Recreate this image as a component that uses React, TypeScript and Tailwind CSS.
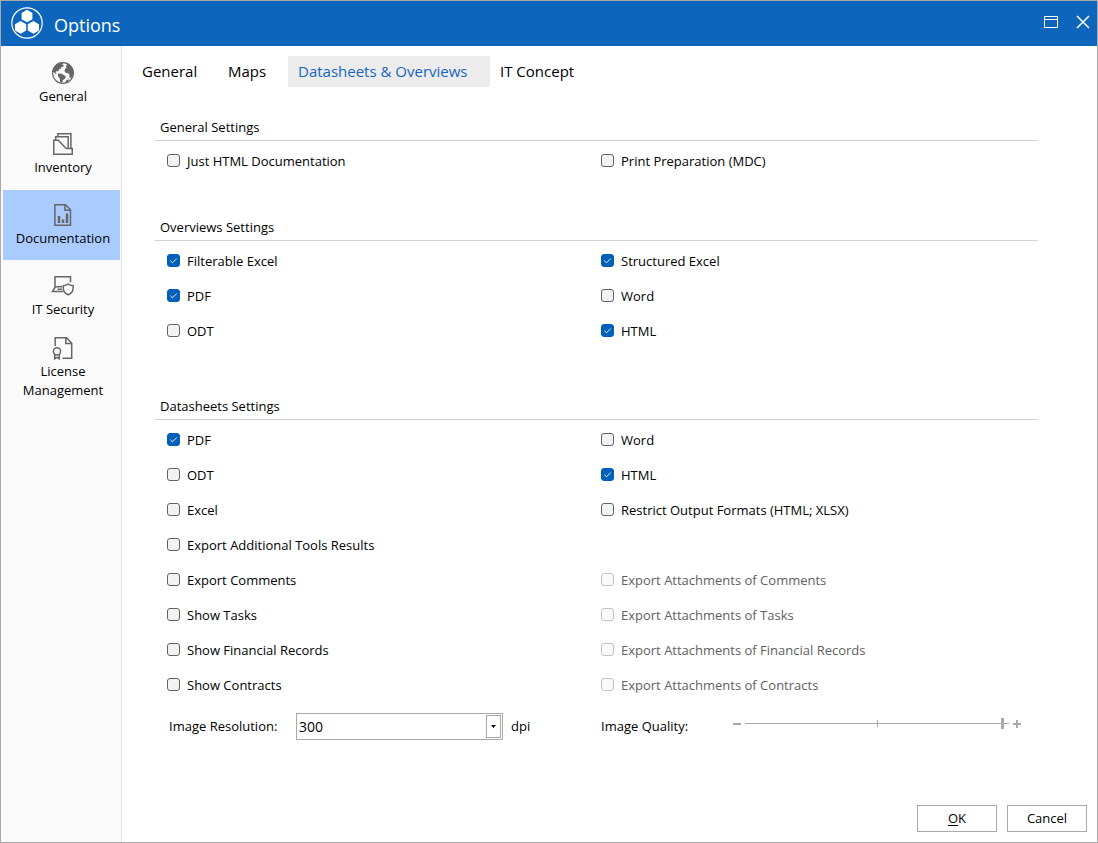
import { useState } from "react";
import type { ReactNode } from "react";
import clsx from "clsx";

interface Option {
  label: string;
  checked?: boolean;
  disabled?: boolean;
}

// null leaves the cell empty
type Row = [Option, Option | null];

const generalRows: Row[] = [
  [{ label: "Just HTML Documentation" }, { label: "Print Preparation (MDC)" }],
];

const overviewRows: Row[] = [
  [
    { label: "Filterable Excel", checked: true },
    { label: "Structured Excel", checked: true },
  ],
  [{ label: "PDF", checked: true }, { label: "Word" }],
  [{ label: "ODT" }, { label: "HTML", checked: true }],
];

const datasheetRows: Row[] = [
  [{ label: "PDF", checked: true }, { label: "Word" }],
  [{ label: "ODT" }, { label: "HTML", checked: true }],
  [{ label: "Excel" }, { label: "Restrict Output Formats (HTML; XLSX)" }],
  [{ label: "Export Additional Tools Results" }, null],
  [
    { label: "Export Comments" },
    { label: "Export Attachments of Comments", disabled: true },
  ],
  [
    { label: "Show Tasks" },
    { label: "Export Attachments of Tasks", disabled: true },
  ],
  [
    { label: "Show Financial Records" },
    { label: "Export Attachments of Financial Records", disabled: true },
  ],
  [
    { label: "Show Contracts" },
    { label: "Export Attachments of Contracts", disabled: true },
  ],
];

function Logo() {
  return (
    <svg className="h-8 w-8" viewBox="0 0 32 32" aria-hidden="true">
      <circle cx="16" cy="16" r="15.2" fill="none" stroke="#fff" strokeWidth="1.2" />
      <g fill="#fff">
        <path d="M16 2.8l5.400 3.100v6.300L16 15.300l-5.400-3.100V5.900z" />
        <path d="M9.600 14l5.600 3.200v6.400l-5.600 3.200L4 23.600v-6.400z" />
        <path d="M22.400 14l5.600 3.200v6.400l-5.600 3.200-5.600-3.200v-6.400z" />
      </g>
    </svg>
  );
}

function Icon({ children }: { children: ReactNode }) {
  return (
    <svg
      className="h-6 w-6"
      viewBox="0 0 24 24"
      fill="none"
      stroke="#666"
      strokeWidth="1.5"
      aria-hidden="true"
    >
      {children}
    </svg>
  );
}

const navItems = [
  {
    label: "General",
    icon: (
      <Icon>
        <circle cx="12" cy="12" r="10.400" strokeWidth="1.200" />
        <g fill="#666" stroke="none">
          <path d="M1.500 11C2 5.500 6 1.500 11.500 1.300l.8 1.200-1.300.8 1.800 1-.6 1.400-1.900.2-.4 1.700-1.900.9-.8 1.900-1.600-.3-1 1.200 1 1.200L4.500 13l-1.500-1.700z" />
          <path d="M6.800 12.800l3.200-.4 2.800 1.500 2 1.300-.8 2.600-2 1.200-1 2.700-1.800-.5-.4-3.700-1.800-2.200z" />
          <path d="M14.800 2c3.800 1 6.600 3.800 7.500 7.500l.1 3.200-1.100 3.300-1.300 1.200-1.400-.9-.3-3-1.200-1-2.300-.2-1.300-2 .6-2.300 1.700-1-1.100-1.400 1.300-1.300z" />
          <path d="M15.500 19l3.300-.8-2.300 2.600-2.600.9z" />
        </g>
      </Icon>
    ),
  },
  {
    label: "Inventory",
    icon: (
      <Icon>
        <path d="M2.750 22.200V8.300h4.500l3.300 3.500 4.700 4.700h6v5.700z" />
        <path d="M4.700 8V4.800h12.500v11.200M6.900 4.500V1.800h13v14.500" />
      </Icon>
    ),
  },
  {
    label: "Documentation",
    icon: (
      <Icon>
        <path d="M3.900 1.800h10.600l5 5v15.400H3.900z" />
        <path d="M14 2v5.300h5.300" />
        <path d="M8 13V20M12 16.500V20M16 10.500V20" strokeWidth="2.500" />
      </Icon>
    ),
  },
  {
    label: "IT Security",
    icon: (
      <Icon>
        <path d="M4 13V2.800h15.500v5.400M4 12.800h7M4.200 13l-2.700 4.500H12M6.500 15.200H11" />
        <path d="M17.200 10c1.500 1.200 3 1.600 4.900 1.700v2.500c0 3.200-2 5.300-4.900 6.500-2.900-1.200-4.900-3.300-4.900-6.500v-2.500c1.900-.1 3.400-.5 4.900-1.700z" />
      </Icon>
    ),
  },
  {
    label: "License Management",
    icon: (
      <Icon>
        <path d="M4.200 10V1.800h11.300l5.200 5.400v15H11.500" />
        <path d="M14.800 2v5.600h5.700" />
        <circle cx="6" cy="15.300" r="3.600" />
        <path d="M3.700 18v4.800L6 21.400l2.300 1.400V18" />
      </Icon>
    ),
  },
];

const tabs = [
  { label: "General", width: "w-[86px]" },
  { label: "Maps", width: "w-[70px]" },
  { label: "Datasheets & Overviews", width: "w-[202px]" },
  { label: "IT Concept", width: "w-[106px]" },
];

function CheckOption({ label, checked = false, disabled }: Option) {
  const [on, setOn] = useState(checked);

  return (
    <label
      className={clsx(
        "flex h-[35px] items-center gap-[7px]",
        disabled && "text-[#5f5f5f]"
      )}
    >
      <span className="relative h-[13px] w-[13px]">
        <input
          type="checkbox"
          checked={on}
          disabled={disabled}
          onChange={(e) => setOn(e.target.checked)}
          className="block h-[13px] w-[13px] appearance-none rounded-[3px] border border-[#626262] bg-[#f3f3f3] checked:border-[#005fb8] checked:bg-[#005fb8] disabled:border-[#c3c3c3] disabled:bg-[#f9f9f9]"
        />
        {on && (
          <svg
            className="pointer-events-none absolute inset-0 h-[13px] w-[13px]"
            viewBox="0 0 13 13"
            fill="none"
            stroke="#fff"
            strokeWidth=".9"
            aria-hidden="true"
          >
            <path d="M3.300 6.700l2.200 2.100 4.300-4.300" />
          </svg>
        )}
      </span>
      <span className="pt-0.5">{label}</span>
    </label>
  );
}

function Section({ title, rows }: { title: string; rows: Row[] }) {
  return (
    <section>
      <h2 className="h-[27px] border-b border-[#d3d3d3] pl-[5px] leading-[26px]">
        {title}
      </h2>
      <div className="grid grid-cols-2 pt-0.5 pr-[3px] pl-3">
        {rows.map(([left, right]) => [
          <CheckOption key={left.label} {...left} />,
          right ? (
            <CheckOption key={`${left.label}-right`} {...right} />
          ) : (
            <span key={`${left.label}-right`} />
          ),
        ])}
      </div>
    </section>
  );
}

function ImageSettings() {
  const [resolution, setResolution] = useState("300");
  const [quality, setQuality] = useState(98);

  return (
    <div className="mt-[11px] grid grid-cols-2 pr-[3px] pl-3">
      <div className="flex h-[27px] items-center pl-0.5">
        <label htmlFor="resolution" className="w-[127px]">
          Image Resolution:
        </label>
        <div className="relative h-[27px] w-[207px]">
          <select
            id="resolution"
            value={resolution}
            onChange={(e) => setResolution(e.target.value)}
            className="h-full w-full appearance-none border border-[#a9a9a9] bg-white pl-0.5 text-sm"
          >
            <option>72</option>
            <option>150</option>
            <option>300</option>
            <option>600</option>
          </select>
          <span className="pointer-events-none absolute top-0.5 right-0.5 flex h-[23px] w-[15px] items-center justify-center border border-[#a9a9a9] bg-white">
            <svg className="h-[3px] w-[5px]" viewBox="0 0 5 3" aria-hidden="true">
              <path d="M0 0h5L2.500 3z" />
            </svg>
          </span>
        </div>
        <span className="pl-2">dpi</span>
      </div>
      <div className="flex h-[27px] items-center">
        <label htmlFor="quality" className="w-[132px]">
          Image Quality:
        </label>
        <div className="flex flex-1 items-center gap-1 self-start pt-[5px] pr-3.5">
          <button
            type="button"
            aria-label="Decrease"
            onClick={() => setQuality(Math.max(0, quality - 1))}
          >
            <svg className="h-2 w-2" viewBox="0 0 8 8" aria-hidden="true">
              <path d="M0 3h8v2H0z" fill="#a9a9a9" />
            </svg>
          </button>
          <div className="relative flex h-[11px] flex-1 items-center">
            <span className="absolute inset-x-0 top-[5px] h-px bg-[#a9a9a9]" />
            <span className="absolute top-0.5 left-1/2 h-[7px] w-px bg-[#a9a9a9]" />
            <input
              id="quality"
              type="range"
              min={0}
              max={100}
              value={quality}
              onChange={(e) => setQuality(Number(e.target.value))}
              className="relative block h-[11px] w-full appearance-none bg-transparent [&::-webkit-slider-thumb]:h-[11px] [&::-webkit-slider-thumb]:w-[3px] [&::-webkit-slider-thumb]:appearance-none [&::-webkit-slider-thumb]:bg-[#a9a9a9]"
            />
          </div>
          <button
            type="button"
            aria-label="Increase"
            onClick={() => setQuality(Math.min(100, quality + 1))}
          >
            <svg className="h-2 w-2" viewBox="0 0 8 8" aria-hidden="true">
              <path d="M0 3h3V0h2v3h3v2H5v3H3V5H0z" fill="#a9a9a9" />
            </svg>
          </button>
        </div>
      </div>
    </div>
  );
}

export default function App() {
  const [activeNav, setActiveNav] = useState("Documentation");
  const [activeTab, setActiveTab] = useState("Datasheets & Overviews");

  return (
    <div className="flex min-h-screen flex-col border border-[#a9a9a9] bg-white font-['Open_Sans','Noto_Sans',sans-serif] text-[13px] text-black">
      <header className="flex h-[45px] items-center bg-[#0d66bb] pr-[7px] pb-0.5 pl-2.5 text-white">
        <Logo />
        <h1 className="flex-1 pt-1 pl-[11px] text-[18px] leading-6">Options</h1>
        <div className="flex gap-[18px] pb-0.5">
          <button type="button" aria-label="Maximize">
            <svg className="h-3.5 w-3.5" viewBox="0 0 14 14" fill="none" stroke="#fff" aria-hidden="true">
              <path d="M.5 1.500h13v11H.500zM1 4.500h12" />
            </svg>
          </button>
          <button type="button" aria-label="Close">
            <svg className="h-3.5 w-3.5" viewBox="0 0 14 14" fill="none" stroke="#fff" strokeWidth="1.500" aria-hidden="true">
              <path d="M1 1l12 12M13 1L1 13" />
            </svg>
          </button>
        </div>
      </header>

      <div className="flex flex-1">
        <nav className="flex w-[121px] shrink-0 flex-col gap-px border-r border-[#e3e3e3] bg-[#fafafa] py-0.5 pr-px pl-0.5">
          {navItems.map((item) => (
            <button
              key={item.label}
              type="button"
              onClick={() => setActiveNav(item.label)}
              className={clsx(
                "flex h-[70px] flex-col items-center justify-center gap-0.5 pt-px pl-[3px] leading-[19px]",
                activeNav === item.label && "bg-[#a9cbff]"
              )}
            >
              {item.icon}
              {item.label}
            </button>
          ))}
        </nav>

        <main className="flex flex-1 flex-col">
          <div role="tablist" className="flex pt-2.5 pl-2.5 text-[15px]">
            {tabs.map((tab) => (
              <button
                key={tab.label}
                type="button"
                role="tab"
                aria-selected={activeTab === tab.label}
                onClick={() => setActiveTab(tab.label)}
                className={clsx(
                  "h-[31px] pl-2.5 text-left whitespace-nowrap",
                  tab.width,
                  activeTab === tab.label && "bg-[#ececec] text-[#1766bf]"
                )}
              >
                {tab.label}
              </button>
            ))}
          </div>

          <div className="flex-1 pt-[27px] pr-[59px] pl-[33px]">
            <Section title="General Settings" rows={generalRows} />
            <div className="pt-9">
              <Section title="Overviews Settings" rows={overviewRows} />
            </div>
            <div className="pt-[45px]">
              <Section title="Datasheets Settings" rows={datasheetRows} />
            </div>
            <ImageSettings />
          </div>

          <footer className="flex justify-end gap-2.5 p-2.5">
            <button type="button" className="h-[27px] w-20 border border-[#a9a9a9] pt-px">
              <span className="underline underline-offset-2">O</span>K
            </button>
            <button type="button" className="h-[27px] w-20 border border-[#a9a9a9] pt-px">
              Cancel
            </button>
          </footer>
        </main>
      </div>
    </div>
  );
}
